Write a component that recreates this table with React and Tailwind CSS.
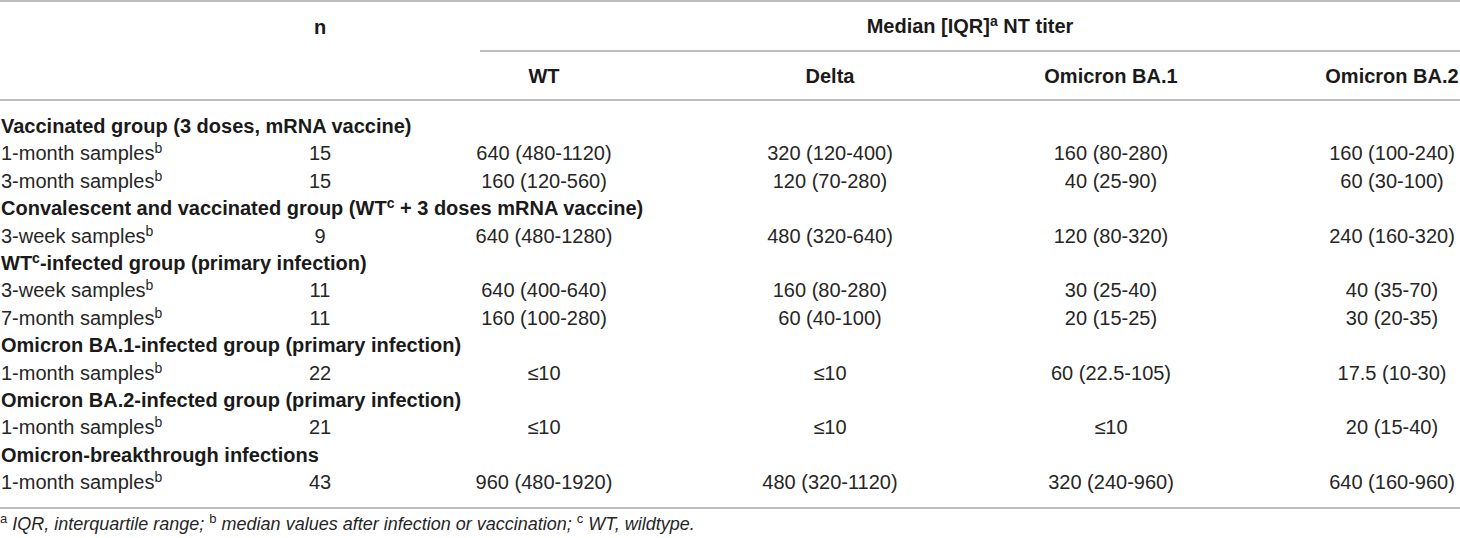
const font = { fontFamily: '"Liberation Sans", Arial, Helvetica, sans-serif' };

const groups = [
  {
    title: <>Vaccinated group (3 doses, mRNA vaccine)</>,
    rows: [
      ['1-month samples', '15', '640 (480-1120)', '320 (120-400)', '160 (80-280)', '160 (100-240)'],
      ['3-month samples', '15', '160 (120-560)', '120 (70-280)', '40 (25-90)', '60 (30-100)'],
    ],
  },
  {
    title: (
      <>
        Convalescent and vaccinated group (WT<sup className="text-[14px]">c</sup> + 3 doses mRNA vaccine)
      </>
    ),
    rows: [['3-week samples', '9', '640 (480-1280)', '480 (320-640)', '120 (80-320)', '240 (160-320)']],
  },
  {
    title: (
      <>
        WT<sup className="text-[14px]">c</sup>-infected group (primary infection)
      </>
    ),
    rows: [
      ['3-week samples', '11', '640 (400-640)', '160 (80-280)', '30 (25-40)', '40 (35-70)'],
      ['7-month samples', '11', '160 (100-280)', '60 (40-100)', '20 (15-25)', '30 (20-35)'],
    ],
  },
  {
    title: <>Omicron BA.1-infected group (primary infection)</>,
    rows: [['1-month samples', '22', '≤10', '≤10', '60 (22.5-105)', '17.5 (10-30)']],
  },
  {
    title: <>Omicron BA.2-infected group (primary infection)</>,
    rows: [['1-month samples', '21', '≤10', '≤10', '≤10', '20 (15-40)']],
  },
  {
    title: <>Omicron-breakthrough infections</>,
    rows: [['1-month samples', '43', '960 (480-1920)', '480 (320-1120)', '320 (240-960)', '640 (160-960)']],
  },
];

const cols = 'grid grid-cols-[240px_160px_288px_284px_278px_210px]';

export default function App() {
  return (
    <div className="w-[1460px] h-[538px] bg-white text-[#262626] overflow-hidden" style={font}>
      <div className="border-t-2 border-b-2 border-[#bdbdbd] font-bold text-[20px] text-[#1a1a1a]">
        <div className={`${cols} h-[50px] items-center`}>
          <div className="col-start-2 text-center">n</div>
          <div className="col-span-4 ml-[80px] h-full flex items-center justify-center border-b-2 border-[#bdbdbd]">
            <span>
              Median [IQR]<sup className="text-[14px]">a</sup> NT titer
            </span>
          </div>
        </div>
        <div className={`${cols} h-[47px] items-center`}>
          <div className="col-start-3 text-center">WT</div>
          <div className="text-center">Delta</div>
          <div className="text-center">Omicron BA.1</div>
          <div className="text-center pl-[74px]">Omicron BA.2</div>
        </div>
      </div>

      <div className="pt-[12px] pb-[10px] border-b-2 border-[#bdbdbd] text-[20px] leading-[27.4px]">
        {groups.map((g, gi) => (
          <div key={gi}>
            <div className="font-bold text-[#1a1a1a] pl-[1px] whitespace-nowrap">{g.title}</div>
            {g.rows.map((r, ri) => (
              <div key={ri} className={cols}>
                <div className="pl-[1px] whitespace-nowrap">
                  {r[0]}
                  <sup className="text-[14px]">b</sup>
                </div>
                <div className="text-center">{r[1]}</div>
                <div className="text-center">{r[2]}</div>
                <div className="text-center">{r[3]}</div>
                <div className="text-center">{r[4]}</div>
                <div className="text-center pl-[74px]">{r[5]}</div>
              </div>
            ))}
          </div>
        ))}
      </div>

      <p className="pt-[3px] text-[18px] leading-[24px] italic whitespace-nowrap">
        <sup className="text-[13px] not-italic">a</sup> IQR, interquartile range;{' '}
        <sup className="text-[13px] not-italic">b</sup> median values after infection or vaccination;{' '}
        <sup className="text-[13px] not-italic">c</sup> WT, wildtype.
      </p>
    </div>
  );
}
